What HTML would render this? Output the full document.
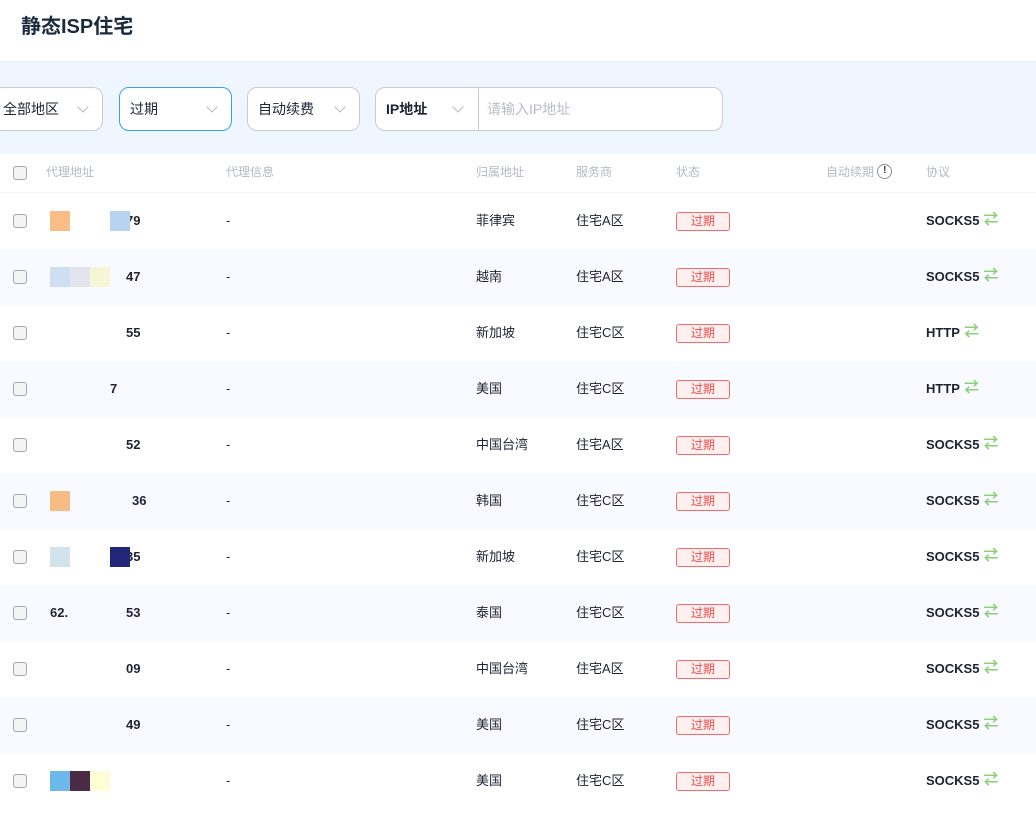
<!DOCTYPE html>
<html><head><meta charset="utf-8"><style>
*{margin:0;padding:0;box-sizing:border-box}
body{width:1036px;height:816px;overflow:hidden;background:#fff;font-family:"Liberation Sans","Noto Sans CJK SC",sans-serif;color:#1e2233;position:relative}
.title{position:absolute;left:21px;top:13px;font-size:20px;font-weight:bold;color:#1c2a3e;line-height:28px}
.band{position:absolute;left:0;top:61px;width:1036px;height:93px;background:#f0f6ff;border-top:1px solid #e6ecf3}
.sel{position:absolute;top:25px;height:44px;border:1px solid #c8ccd2;border-radius:10px;background:#fff;font-size:14px;line-height:42px;padding-left:10px}
.sel .ch{position:absolute;top:15px;width:8px;height:8px;border-right:1.5px solid #b5b9c0;border-bottom:1.5px solid #b5b9c0;transform:rotate(45deg)}
.row{position:absolute;left:0;width:1036px;height:56px;font-size:13px;line-height:56px}
.row>*{position:absolute;top:0}
.cb{left:13px;width:14px;height:14px;border:1.5px solid #a4a8b0;border-radius:3px;background:#f4f4f4;top:21px!important}
.hd{color:#b5b9c2;font-size:12px}
.tag{left:676px;top:19px!important;width:54px;height:19px;border:1px solid #f36a6a;border-radius:3px;background:#fff0f0;color:#f04848;font-size:12px;text-align:center;line-height:17px}
.pr{left:926px;font-weight:bold;font-size:13px}
.ar{color:#8ed07a;font-size:15px;font-weight:bold;margin-left:4px;position:relative;top:-1px}
.sq{width:20px;height:20px;top:18px!important}
</style></head><body>
<div class="title">静态ISP住宅</div>
<div class="band">
 <div class="sel" style="left:-8px;width:111px">全部地区<span class="ch" style="left:86px"></span></div>
 <div class="sel" style="left:119px;width:113px;border-color:#3d9ef0">过期<span class="ch" style="left:88px"></span></div>
 <div class="sel" style="left:247px;width:113px">自动续费<span class="ch" style="left:88px"></span></div>
 <div class="sel" style="left:375px;width:348px;font-weight:bold">IP地址<span class="ch" style="left:78px"></span><span style="position:absolute;left:102px;top:0;height:42px;border-left:1px solid #c8ccd2"></span><span style="position:absolute;left:111px;color:#b8bcc4;font-weight:normal">请输入IP地址</span></div>
</div>
<div class="row" style="top:154px;height:39px;line-height:37px;border-bottom:1px solid #f2f4f8">
 <span class="cb" style="top:12px!important"></span>
 <span class="hd" style="left:46px">代理地址</span>
 <span class="hd" style="left:226px">代理信息</span>
 <span class="hd" style="left:476px">归属地址</span>
 <span class="hd" style="left:576px">服务商</span>
 <span class="hd" style="left:676px">状态</span>
 <span class="hd" style="left:826px">自动续期 <span style="display:inline-block;vertical-align:middle;width:15px;height:15px;border:1.5px solid #8a8e96;border-radius:50%;color:#333;font-size:10px;text-align:center;line-height:12px;font-weight:bold;margin-top:-3px">!</span></span>
 <span class="hd" style="left:926px">协议</span>
</div>
<div id="rows"></div>
<script>
var d=[["79","菲律宾","A","SOCKS5",[["#fbbd86",50],["#b8d3ef",110]]],
["47","越南","A","SOCKS5",[["#cddff0",50],["#e3e5ee",70],["#f7f5d6",90]]],
["55","新加坡","C","HTTP",[]],["7","美国","C","HTTP",[]],
["52","中国台湾","A","SOCKS5",[]],["36","韩国","C","SOCKS5",[["#f7bb84",50]]],
["35","新加坡","C","SOCKS5",[["#d3e3ec",50],["#22277a",110]]],
["62.  53","泰国","C","SOCKS5",[]],["09","中国台湾","A","SOCKS5",[]],
["49","美国","C","SOCKS5",[]],["","美国","C","SOCKS5",[["#6cb8ea",50],["#4a2a45",70],["#fffdd6",90]]]];
var h="";d.forEach(function(r,i){var t=193+i*56;var bg=i%2?"#f8faff":"#fff";
var ip=r[0].length>2?'<b style="left:50px">62.</b><b style="left:126px">53</b>':'<b style="left:'+(r[0]=="7"?110:(r[0]=="36"?132:126))+'px">'+r[0]+'</b>';
var sq=r[4].map(function(s){return '<span class="sq" style="left:'+s[1]+'px;background:'+s[0]+'"></span>'}).join("");
h+='<div class="row" style="top:'+t+'px;background:'+bg+'"><span class="cb"></span>'+ip+sq+
'<span style="left:226px">-</span><span style="left:476px">'+r[1]+'</span><span style="left:576px">住宅'+r[2]+'区</span><span class="tag">过期</span><span class="pr">'+r[3]+'<span class="ar">⇄</span></span></div>';});
document.getElementById("rows").innerHTML=h;
</script>
</body></html>
